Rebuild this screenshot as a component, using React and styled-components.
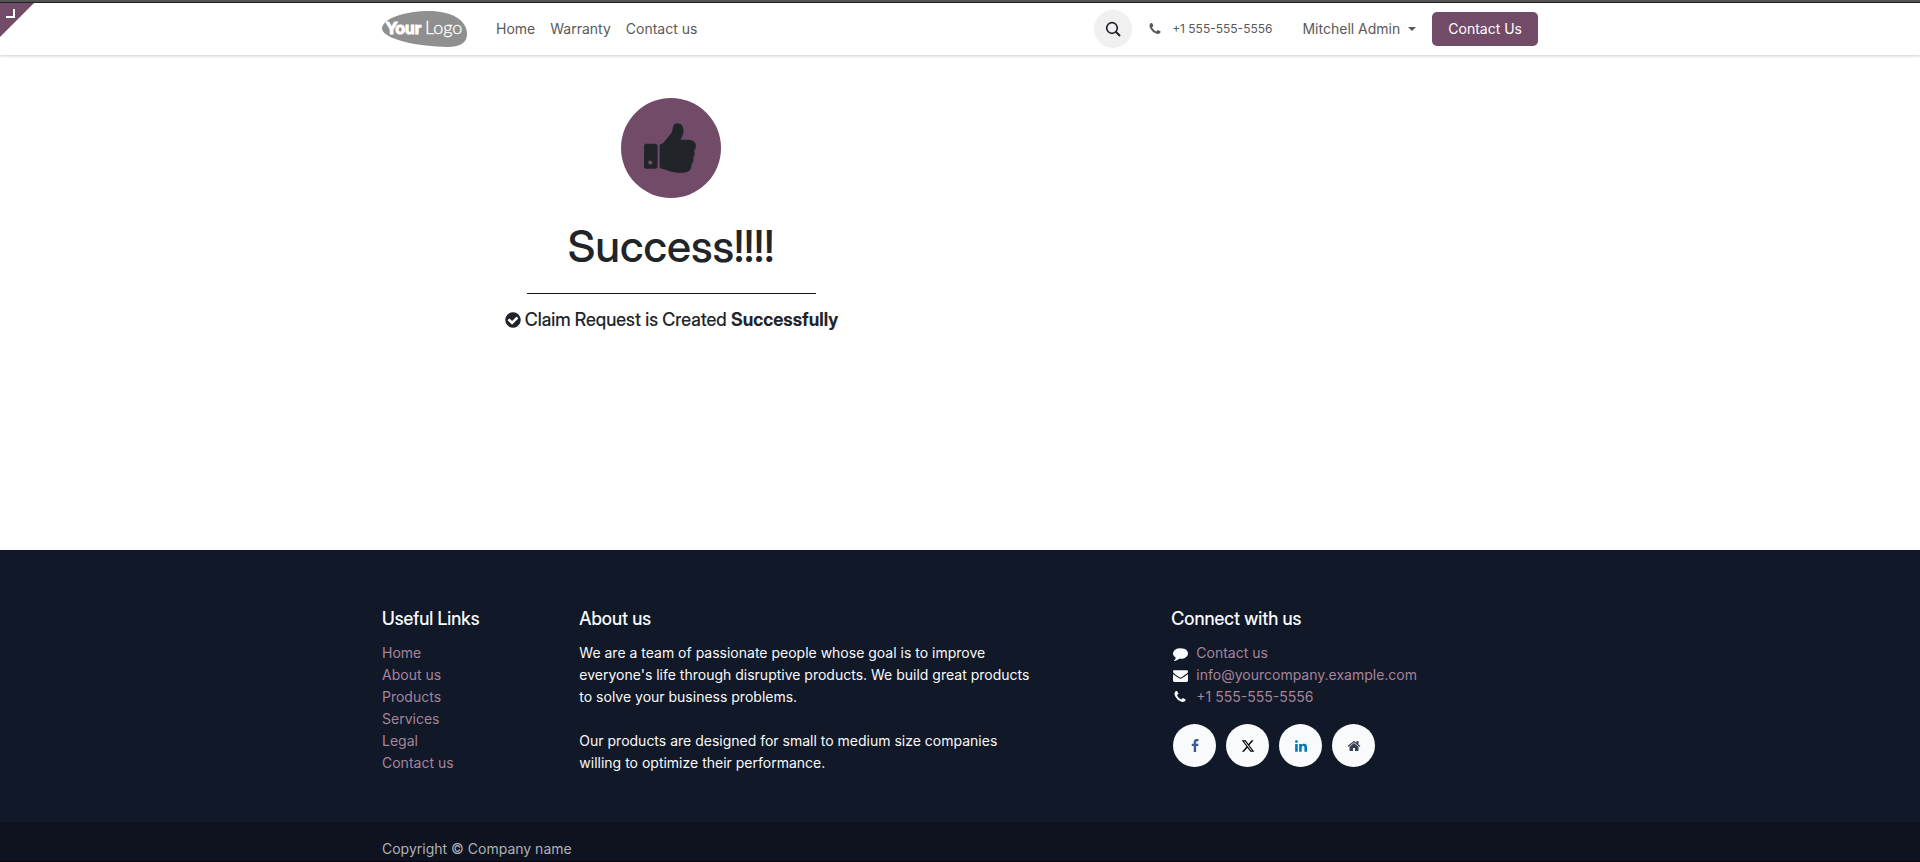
import React from "react";
import styled, { createGlobalStyle } from "styled-components";
import { FaXTwitter } from "react-icons/fa6";

const GlobalStyle = createGlobalStyle`
  *, *::before, *::after { box-sizing: border-box; }
  body {
    margin: 0;
    background: #fff;
    color: #212529;
    font-family: Inter, "Liberation Sans", sans-serif;
    font-size: 14px;
    line-height: 22px;
  }
  h1, h2, p, ul { margin: 0; padding: 0; }
  ul { list-style: none; }
  a { text-decoration: none; }
`;

const ICONS = {
  thumbsUp:
    "M320 1344q0-26-19-45t-45-19q-27 0-45.5 19t-18.5 45q0 27 18.5 45.5t45.5 18.5q26 0 45-18.5t19-45.5zm160-512v640q0 26-19 45t-45 19h-288q-26 0-45-19t-19-45v-640q0-26 19-45t45-19h288q26 0 45 19t19 45zm1184 0q0 86-55 149 15 44 15 76 3 76-43 137 17 56 0 117-15 57-54 94 9 112-49 181-64 76-197 78h-129q-66 0-144-15.5t-121.5-29-120.5-39.5q-123-43-158-44-26-1-45-19.5t-19-44.5v-641q0-25 18-43.5t43-20.5q24-2 76-59t101-121q68-87 101-120 18-18 31-48t17.5-48.5 13.5-60.5q7-39 12.5-61t19.5-52 34-50q19-19 45-19 46 0 82.5 10.5t60 26 40 40.5 24 45 12 50 5 45 .5 39q0 38-9.5 76t-19 60-27.5 56q-3 6-10 18t-11 22-8 24h277q78 0 135 57t57 135z",
  phone:
    "M1600 1240q0 27-10 70.5t-21 68.5q-21 50-122 106-94 51-186 51-27 0-53-3.5t-57.5-12.5-47-14.5-55.5-20.5-49-18q-98-35-175-83-127-79-264-216t-216-264q-48-77-83-175-3-9-18-49t-20.5-55.5-14.5-47-12.5-57.5-3.5-53q0-92 51-186 56-101 106-122 25-11 68.5-21t70.5-10q14 0 21 3 18 6 53 76 11 19 30 54t35 63.5 31 53.5q3 4 17.5 25t21.5 35.5 7 28.5q0 20-28.5 50t-62 55-62 53-28.5 46q0 9 5 22.5t8.5 20.5 14 24 11.5 19q76 137 174 235t235 174q2 1 19 11.5t24 14 20.5 8.5 22.5 5q18 0 46-28.5t53-62 55-62 50-28.5q14 0 28.5 7t35.5 21.5 25 17.5q25 15 53.5 31t63.5 35 54 30q70 35 76 53 3 7 3 21z",
  comment:
    "M1792 896q0 174-120 321.5t-326 233-450 85.5q-70 0-145-8-198 175-460 242-49 14-114 22-17 2-30.5-9t-17.5-29v-1q-3-4-.5-12t2-10 4.5-9.5l6-9 7-8.5 8-9q7-8 31-34.5t34.5-38 31-39.5 32.5-51 27-59 26-76q-157-89-247.5-220t-90.5-281q0-130 71-248.5t191-204.5 286-136.5 348-50.5q244 0 450 85.5t326 233 120 321.5z",
  envelope:
    "M1792 710v794q0 66-47 113t-113 47h-1472q-66 0-113-47t-47-113v-794q44 49 101 87 362 246 497 345 57 42 92.5 65.5t94.5 48 110 24.5h2q51 0 110-24.5t94.5-48 92.5-65.5q170-123 498-345 57-39 100-87zm0-294q0 79-49 151t-122 123q-376 261-468 325-10 7-42.5 31t-54 38.5-52 32.5-57.5 27-50 9h-2q-23 0-50-9t-57.5-27-52-32.5-54-38.5-42.5-31q-91-64-262-182.5t-205-142.5q-62-42-117-115.5t-55-136.5q0-78 41.5-130t118.5-52h1472q65 0 112.5 47t47.5 113z",
  check:
    "M1412 734q0-28-18-46l-91-90q-19-19-45-19t-45 19l-408 407-226-226q-19-19-45-19t-45 19l-91 90q-18 18-18 46 0 27 18 45l362 362q19 19 45 19 27 0 46-19l543-543q18-18 18-45zm252 162q0 209-103 385.5t-279.5 279.5-385.5 103-385.5-103-279.5-279.5-103-385.5 103-385.5 279.5-279.5 385.5-103 385.5 103 279.5 279.5 103 385.5z",
  facebook:
    "M1343 12v264h-157q-86 0-116 36t-30 108v189h293l-39 296h-254v759h-306v-759h-255v-296h255v-218q0-186 104-288.5t277-102.5q147 0 228 12z",
  linkedin:
    "M477 625v991h-330v-991h330zm21-306q1 73-50.5 122t-135.5 49h-2q-82 0-132-49t-50-122q0-74 51.5-122.5t134.5-48.5 133 48.5 51 122.5zm1166 729v568h-329v-530q0-105-40.5-164.5t-126.5-59.5q-63 0-105.5 34.5t-63.5 85.5q-11 30-11 81v553h-329q2-399 2-647t-1-296l-1-48h329v144h-2q20-32 41-56t56.5-52 87-43.5 114.5-15.5q171 0 275 113.5t104 332.5z",
  home:
    "M1472 992v480q0 26-19 45t-45 19h-384v-384h-256v384h-384q-26 0-45-19t-19-45v-480q0-1 .5-3t.5-3l575-474 575 474q1 2 1 6zm223-69l-62 74q-8 9-21 11h-3q-13 0-21-7l-692-577-692 577q-12 8-24 7-13-2-21-11l-62-74q-8-10-7-23.5t11-21.5l719-599q32-26 76-26t76 26l244 204v-195q0-14 9-23t23-9h192q14 0 23 9t9 23v408l219 182q10 8 11 21.5t-7 23.5z",
};

const Svg = styled.svg`
  flex: none;
  display: block;
  fill: currentColor;
`;

const Icon = ({ name, size }) => (
  <Svg width={size} height={size} viewBox="0 0 1792 1792" aria-hidden="true">
    <path d={ICONS[name]} />
  </Svg>
);

const Page = styled.div`
  position: relative;
  display: flex;
  flex-direction: column;
  min-height: 100vh;
  border-top: 2px solid #555;
  border-bottom: 1px solid #0a0410;
`;

const Container = styled.div`
  width: 100%;
  max-width: 1184px;
  margin: 0 auto;
  padding: 0 14px;
`;

const EditorToggle = styled.button`
  position: absolute;
  top: 1px;
  left: 0;
  width: 34px;
  height: 34px;
  padding: 0;
  border: 0;
  background: #714b67;
  clip-path: polygon(0 0, 100% 0, 0 100%);
`;

const Header = styled.header`
  border-top: 1px solid #222;
  box-shadow: 0 1px 3px rgba(0, 0, 0, 0.2);
`;

const Bar = styled(Container)`
  display: flex;
  align-items: center;
  height: 52px;
`;

const LogoLink = styled.a`
  display: block;
  margin-right: 28px;
`;

const Nav = styled.nav`
  display: flex;
  gap: 15px;
  margin-right: auto;
`;

const NavLink = styled.a`
  color: #595959;
`;

const SearchButton = styled.button`
  display: grid;
  place-items: center;
  width: 38px;
  height: 38px;
  padding: 0;
  margin-right: 16px;
  border: 0;
  border-radius: 50%;
  background: #f0f0f0;
  color: #212529;
`;

const PhoneLink = styled.a`
  display: flex;
  align-items: center;
  gap: 10px;
  margin-right: 30px;
  color: #595959;
  font-size: 12px;
`;

const UserMenu = styled.button`
  display: flex;
  align-items: center;
  gap: 8px;
  padding: 0;
  margin-right: 16px;
  border: 0;
  background: none;
  color: #595959;
  font: inherit;
`;

const Caret = styled.span`
  border: 4px solid transparent;
  border-top-color: currentColor;
  border-bottom: 0;
`;

const Cta = styled.a`
  padding: 6px 16px;
  border-radius: 5px;
  background: #714b67;
  color: #fff;
`;

const Main = styled.main`
  flex: 1;
  padding: 43px 0 40px;
`;

const Message = styled.section`
  display: flex;
  flex-direction: column;
  align-items: center;
  width: 50%;
`;

const Badge = styled.div`
  display: grid;
  place-items: center;
  width: 100px;
  height: 100px;
  border-radius: 50%;
  background: #714b67;
`;

const Title = styled.h1`
  margin-top: 21px;
  font-family: "Inter Display", Inter, sans-serif;
  font-variation-settings: "opsz" 32;
  font-size: 44px;
  font-weight: 500;
  line-height: 54px;
`;

const Divider = styled.hr`
  width: 50%;
  margin: 20px 0 15px;
  border: 0;
  border-top: 1px solid #111827;
`;

const Notice = styled.p`
  display: flex;
  align-items: center;
  gap: 3px;
  font-family: "Inter Display", Inter, sans-serif;
  font-variation-settings: "opsz" 32;
  font-size: 18px;
  font-weight: 500;
`;

const Footer = styled.footer`
  background: #111827;
  color: #f9fafb;
`;

const FooterGrid = styled(Container)`
  display: grid;
  grid-template-columns: repeat(12, 1fr);
  column-gap: 28px;
  padding-top: 58px;
  padding-bottom: 48px;
`;

const Column = styled.section`
  grid-column: ${(p) => p.$span};
  padding-right: 8px;
`;

const ColumnTitle = styled.h2`
  margin-bottom: 12px;
  font-family: "Inter Display", Inter, sans-serif;
  font-variation-settings: "opsz" 32;
  font-size: 18px;
  font-weight: 500;
  line-height: 22px;
`;

const FooterLink = styled.a`
  color: #a5849c;
`;

const Paragraph = styled.p`
  & + & { margin-top: 22px; }
`;

const ContactRow = styled.li`
  display: grid;
  grid-template-columns: 18px auto;
  justify-content: start;
  align-items: center;
  justify-items: center;
  gap: 7px;
`;

const Socials = styled.div`
  display: flex;
  gap: 10px;
  margin-top: 16px;
  padding-left: 2px;
`;

const Social = styled.a`
  display: grid;
  place-items: center;
  width: 43px;
  height: 43px;
  border-radius: 50%;
  background: #f9fafb;
  color: ${(p) => p.$color};
`;

const Legal = styled.div`
  padding: 16px 0 1px;
  background: #0e131f;
  color: #b0b1b5;
`;

const Logo = () => (
  <Svg width="86" height="36" viewBox="0 0 86 36" role="img" aria-label="Your Logo">
    <path
      fill="#8f8f8f"
      d="M0 17C1 7 24 0 47 0c22 0 38 9 38 23 0 8-6 13-19 13C36 36-1 28 0 17Z"
    />
    <text x="4" y="23" fill="#fff" stroke="#fff" strokeWidth="1" fontFamily="Lato, sans-serif" fontSize="17" fontWeight="900">
      Your
    </text>
    <text x="43" y="23" fill="#fff" stroke="#fff" strokeWidth="0.3" fontFamily="Lato, sans-serif" fontSize="18" fontWeight="300">
      Logo
    </text>
  </Svg>
);

const LINKS = ["Home", "About us", "Products", "Services", "Legal", "Contact us"];

const CONTACTS = [
  { icon: "comment", size: 15, label: "Contact us", href: "#contact" },
  { icon: "envelope", size: 15, label: "info@yourcompany.example.com", href: "mailto:info@yourcompany.example.com" },
  { icon: "phone", size: 14, label: "+1 555-555-5556", href: "tel:+15555555556" },
];

export default function App() {
  return (
    <>
      <GlobalStyle />
      <Page>
        <Header>
          <Bar>
            <LogoLink href="#home"><Logo /></LogoLink>
            <Nav>
              <NavLink href="#home">Home</NavLink>
              <NavLink href="#warranty">Warranty</NavLink>
              <NavLink href="#contact">Contact us</NavLink>
            </Nav>
            <SearchButton aria-label="Search">
              <svg width="16" height="16" viewBox="0 0 16 16" fill="none" stroke="currentColor" strokeWidth="1.7">
                <circle cx="7" cy="7" r="5.3" />
                <path d="M10.8 10.8 15 15" strokeWidth="2" />
              </svg>
            </SearchButton>
            <PhoneLink href="tel:+15555555556">
              <Icon name="phone" size={14} />
              +1 555-555-5556
            </PhoneLink>
            <UserMenu>
              Mitchell Admin
              <Caret />
            </UserMenu>
            <Cta href="#contact">Contact Us</Cta>
          </Bar>
        </Header>
        <EditorToggle aria-label="Open editor">
          <Svg width="34" height="34" viewBox="0 0 34 34">
            <path d="M14 6v8H6" fill="none" stroke="#fff" strokeWidth="2" />
          </Svg>
        </EditorToggle>

        <Main>
          <Container>
            <Message>
              <Badge><Icon name="thumbsUp" size={58} /></Badge>
              <Title>Success!!!!</Title>
              <Divider />
              <Notice>
                <Icon name="check" size={18} />
                <span>Claim Request is Created <b>Successfully</b></span>
              </Notice>
            </Message>
          </Container>
        </Main>

        <Footer>
          <FooterGrid>
            <Column $span="1 / span 2">
              <ColumnTitle>Useful Links</ColumnTitle>
              <ul>
                {LINKS.map((label) => (
                  <li key={label}><FooterLink href="#links">{label}</FooterLink></li>
                ))}
              </ul>
            </Column>
            <Column $span="3 / span 5">
              <ColumnTitle>About us</ColumnTitle>
              <Paragraph>
                We are a team of passionate people whose goal is to improve everyone's life
                through disruptive products. We build great products to solve your business
                problems.
              </Paragraph>
              <Paragraph>
                Our products are designed for small to medium size companies willing to
                optimize their performance.
              </Paragraph>
            </Column>
            <Column $span="9 / span 4">
              <ColumnTitle>Connect with us</ColumnTitle>
              <ul>
                {CONTACTS.map((c) => (
                  <ContactRow key={c.icon}>
                    <Icon name={c.icon} size={c.size} />
                    <FooterLink href={c.href}>{c.label}</FooterLink>
                  </ContactRow>
                ))}
              </ul>
              <Socials>
                <Social href="#facebook" aria-label="Facebook" $color="#3b5998"><Icon name="facebook" size={14} /></Social>
                <Social href="#x" aria-label="X" $color="#000"><FaXTwitter size={14} /></Social>
                <Social href="#linkedin" aria-label="LinkedIn" $color="#0077b5"><Icon name="linkedin" size={14} /></Social>
                <Social href="#home" aria-label="Home page" $color="#374151"><Icon name="home" size={14} /></Social>
              </Socials>
            </Column>
          </FooterGrid>
          <Legal>
            <Container>Copyright © Company name</Container>
          </Legal>
        </Footer>
      </Page>
    </>
  );
}
